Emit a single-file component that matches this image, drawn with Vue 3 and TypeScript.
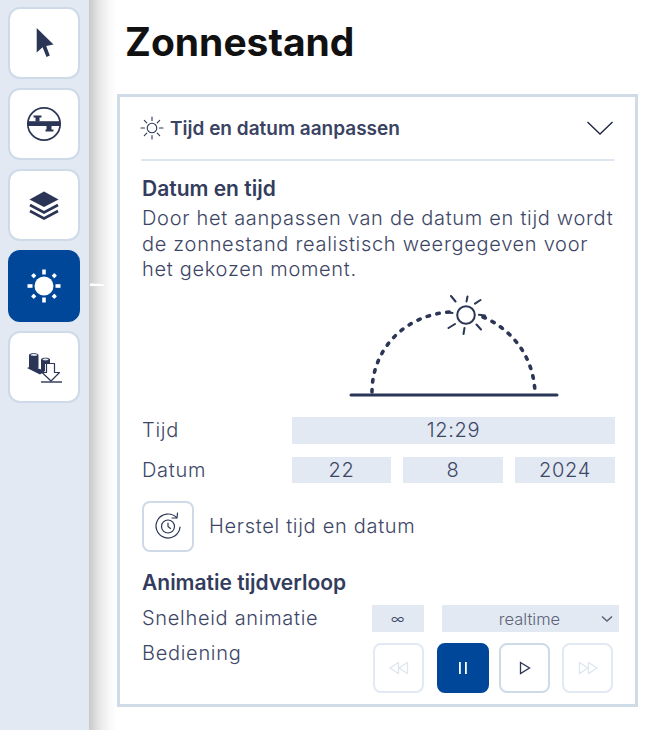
<script setup lang="ts">
const dots = [22, 8, 2024]
</script>

<template>
  <div class="page">
    <nav class="rail">
      <button class="tool">
        <svg width="28" height="32" viewBox="0 0 28 32"><path d="M6.700 1 L6.700 25.500 L12.600 20.200 L16.500 30 L19.800 28.600 L16.200 19 L23.500 17.500 Z" fill="#2b3555"/></svg>
      </button>
      <button class="tool">
        <svg width="36" height="36" viewBox="0 0 36 36">
          <circle cx="18" cy="18" r="16.200" fill="none" stroke="#2b3555" stroke-width="1.700"/>
          <path d="M2 15.200 H34 V20 H2 Z" fill="#2b3555"/>
          <path d="M7.500 9.500 H15.500 V11.500 H13.500 V15.500 H9.500 V11.500 H7.500 Z" fill="#2b3555"/>
          <path d="M20.500 19.500 H25.500 V23.500 H27.500 V25.500 H19.500 V23.500 H20.500 Z" fill="#2b3555"/>
        </svg>
      </button>
      <button class="tool">
        <svg width="32" height="30" viewBox="0 0 32 30">
          <path d="M16 1.500 L30.500 9.500 L16 17 L1.500 9.500 Z" fill="#2b3555"/>
          <path d="M2 15 L16 22.500 L30 15 M2 21 L16 28.500 L30 21" fill="none" stroke="#2b3555" stroke-width="2.600"/>
        </svg>
      </button>
      <button class="tool active">
        <svg width="34" height="34" viewBox="0 0 34 34" fill="#fff">
          <circle cx="17" cy="17" r="9.500"/>
          <rect x="15.200" y="0.500" width="3.600" height="5"/><rect x="15.200" y="28.500" width="3.600" height="5"/>
          <rect x="0.500" y="15.200" width="5" height="3.600"/><rect x="28.500" y="15.200" width="5" height="3.600"/>
          <rect x="4.800" y="4.800" width="3.800" height="3.800" rx="0.600" transform="rotate(45 6.700 6.700)"/>
          <rect x="25.400" y="4.800" width="3.800" height="3.800" rx="0.600" transform="rotate(45 27.300 6.700)"/>
          <rect x="4.800" y="25.400" width="3.800" height="3.800" rx="0.600" transform="rotate(45 6.700 27.300)"/>
          <rect x="25.400" y="25.400" width="3.800" height="3.800" rx="0.600" transform="rotate(45 27.300 27.300)"/>
        </svg>
      </button>
      <button class="tool">
        <svg width="36" height="32" viewBox="0 0 36 32">
          <path d="M1 17 L6 15 L19 20 L14 23.500 Z" fill="#2b3555"/>
          <path d="M3 4 C3 1.500 12.500 1.500 12.500 4 V16.500 C12 18.500 3.500 18.500 3 16.500 Z" fill="#2b3555"/>
          <path d="M15 8.500 C15 6 24 6 24 8.500 V13 H19 V20 H15 Z" fill="#2b3555"/>
          <path d="M4.500 4 C5.500 2.800 10.500 2.800 11.500 4 C10.500 5.200 5.500 5.200 4.500 4 Z M16.500 8.500 C17.500 7.300 21.500 7.300 22.500 8.500 C21.500 9.700 17.500 9.700 16.500 8.500 Z" fill="#e2e9f2"/>
          <path d="M20.500 12.500 H28.500 V21.500 H33.500 L25 30 L16 21.500 H20.500 Z" fill="#fff" stroke="#2b3555" stroke-width="1.200" stroke-linejoin="round"/>
          <path d="M15 31 H36" stroke="#2b3555" stroke-width="1.400"/>
        </svg>
      </button>
    </nav>
    <span class="handle"></span>

    <main class="main">
      <h1>Zonnestand</h1>
      <section class="panel">
        <header class="head">
          <div class="head-title">
            <svg width="24" height="24" viewBox="0 0 24 24" fill="none" stroke="#2b3555" stroke-width="1.100" stroke-linecap="round">
              <circle cx="12" cy="12" r="4.800"/>
              <path d="M12 1V4.500M12 19.500V23M1 12H4.500M19.500 12H23M4.300 4.300L6.800 6.800M17.200 17.200L19.700 19.700M19.700 4.300L17.200 6.800M6.800 17.200L4.300 19.700"/>
            </svg>
            <span>Tijd en datum aanpassen</span>
          </div>
          <svg class="caret" width="28" height="16" viewBox="0 0 28 16" fill="none" stroke="#1f2740" stroke-width="1.400"><path d="M1.500 2 L14 14 L26.500 2"/></svg>
        </header>

        <h2 class="first">Datum en tijd</h2>
        <p class="copy">Door het aanpassen van de datum en tijd wordt de zonnestand realistisch weergegeven voor het gekozen moment.</p>

        <svg class="arc" width="210" height="104" viewBox="0 0 210 104" fill="none">
          <path d="M23 97 C23 55 55 20 101 17" stroke="#2b3555" stroke-width="3.600" stroke-linecap="round" stroke-dasharray="2.500 7.500"/>
          <path d="M134 22 C160 33 184 58 186 97" stroke="#2b3555" stroke-width="3.600" stroke-linecap="round" stroke-dasharray="2.500 7.500"/>
          <path d="M2 100 H208" stroke="#2b3555" stroke-width="3" stroke-linecap="round"/>
          <circle cx="117" cy="20" r="8.800" stroke="#2b3555" stroke-width="2"/>
          <path d="M118.500 1.500 L117.500 6.500 M131.500 5 L126 8.700 M136 20.500 L130 19.800 M132 34.500 L127.500 29.500 M114.500 39 L115.500 33 M99.500 33 L106 29 M98 17 L103.500 18 M102 1 L106.500 6.500" stroke="#2b3555" stroke-width="2" stroke-linecap="round"/>
        </svg>

        <div class="row tijd">
          <span class="label">Tijd</span>
          <div class="field wide">12:29</div>
        </div>
        <div class="row datum">
          <span class="label">Datum</span>
          <div class="triple">
            <div v-for="d in dots" :key="d" class="field">{{ d }}</div>
          </div>
        </div>

        <div class="reset">
          <button class="ctl">
            <svg width="28" height="28" viewBox="0 0 28 28" fill="none" stroke="#2b3555" stroke-width="1.200" stroke-linecap="round" stroke-linejoin="round">
              <path d="M26 15 A12 12 0 1 1 22.500 5.500"/>
              <path d="M23.500 1 L23 6 L18 6"/>
              <circle cx="14" cy="14.500" r="6.500"/>
              <path d="M14 11 V14.500 L16.500 16.500"/>
            </svg>
          </button>
          <span class="label">Herstel tijd en datum</span>
        </div>

        <h2 class="second">Animatie tijdverloop</h2>
        <div class="row speed">
          <span class="label">Snelheid animatie</span>
          <div class="field small">∞</div>
          <div class="field select">
            <span>realtime</span>
            <svg width="12" height="8" viewBox="0 0 12 8" fill="none" stroke="#5b6478" stroke-width="1.500"><path d="M1 1.500 L6 6 L11 1.500"/></svg>
          </div>
        </div>
        <div class="row controls">
          <span class="label">Bediening</span>
          <div class="buttons">
            <button class="ctl off">
              <svg width="22" height="14" viewBox="0 0 22 14" fill="none" stroke="#dfe6f0" stroke-width="1.300"><path d="M10.500 1.500 L2 7 L10.500 12.500 Z M19.500 1.500 L11 7 L19.500 12.500 Z"/></svg>
            </button>
            <button class="ctl on">
              <svg width="10" height="14" viewBox="0 0 10 14" fill="#fff"><rect x="1" y="1" width="1.800" height="12"/><rect x="7" y="1" width="1.800" height="12"/></svg>
            </button>
            <button class="ctl plain">
              <svg width="12" height="14" viewBox="0 0 12 14" fill="none" stroke="#2b3555" stroke-width="1.300"><path d="M1.500 1.500 L10.500 7 L1.500 12.500 Z"/></svg>
            </button>
            <button class="ctl off">
              <svg width="22" height="14" viewBox="0 0 22 14" fill="none" stroke="#dfe6f0" stroke-width="1.300"><path d="M2.500 1.500 L11 7 L2.500 12.500 Z M11.500 1.500 L20 7 L11.500 12.500 Z"/></svg>
            </button>
          </div>
        </div>
      </section>
    </main>
  </div>
</template>

<style>
html, body { margin: 0; background: #fff; }
</style>

<style scoped>
.page {
  position: relative;
  display: flex;
  width: 657px;
  height: 730px;
  overflow: hidden;
  font-family: Inter, "Liberation Sans", sans-serif;
  color: #2b3555;
}
button { padding: 0; font: inherit; cursor: pointer; }
.rail {
  box-sizing: border-box;
  flex: 0 0 89px;
  display: flex;
  flex-direction: column;
  gap: 9px;
  padding: 7px 8px;
  background: #e2e9f2;
}
.tool {
  box-sizing: border-box;
  width: 72px;
  height: 72px;
  display: flex;
  align-items: center;
  justify-content: center;
  background: #fff;
  border: 2px solid #cfdae8;
  border-radius: 12px;
}
.tool.active { background: #004699; border-color: #004699; }
.handle {
  position: absolute;
  left: 90px;
  top: 283px;
  width: 14px;
  height: 3px;
  background: #fff;
  border-top: 1px solid #e9e9e9;
  box-sizing: border-box;
}
.main {
  flex: 1;
  box-sizing: border-box;
  padding: 0 19px 0 28px;
  background: linear-gradient(90deg, #c9c9c9 0, #e6e6e6 10px, #f8f8f8 20px, #fff 28px);
}
h1 {
  margin: 0 0 0 8px;
  height: 94px;
  font-size: 39px;
  line-height: 84px;
  font-weight: 700;
  color: #111;
}
.panel {
  box-sizing: border-box;
  width: 521px;
  height: 613px;
  padding: 0 21px;
  background: #fff;
  border: 3px solid #d0dbe8;
}
.head {
  height: 62px;
  display: flex;
  align-items: center;
  justify-content: space-between;
  border-bottom: 2px solid #dde5f0;
}
.head-title { display: flex; align-items: center; gap: 6px; font-size: 19px; font-weight: 600; color: #3a4362; }
.head-title svg { margin-left: -1px; }
h2 { margin: 0; font-size: 21px; line-height: 24px; font-weight: 600; color: #333c5c; }
.first { margin-top: 16px; margin-left: 1px; }
.second { margin-top: 19px; margin-left: 1px; }
.copy {
  margin: 5px -6px 0 1px;
  font-size: 20px;
  font-weight: 300;
  line-height: 25.600px;
  letter-spacing: 0.700px;
  color: #3d4666;
}
.arc { display: block; margin: 12px 0 0 208px; }
.label { font-size: 20px; font-weight: 300; color: #3d4666; letter-spacing: 0.700px; white-space: nowrap; }
.row { display: flex; align-items: center; margin-left: 1px; }
.row > .label { flex: 0 0 150px; }
.tijd { margin-top: 18px; }
.datum { margin-top: 13px; }
.field {
  box-sizing: border-box;
  flex: none;
  height: 27px;
  display: flex;
  align-items: center;
  justify-content: center;
  background: #e2e9f2;
  font-size: 20px;
  font-weight: 300;
  letter-spacing: 0.700px;
  color: #3d4666;
}
.wide { width: 323px; }
.triple { flex: none; display: grid; grid-template-columns: 99px 100px 100px; column-gap: 12px; }
.datum .field { height: 26px; }
.reset { display: flex; align-items: center; gap: 15px; margin: 18px 0 0 1px; }
.ctl {
  box-sizing: border-box;
  flex: none;
  width: 52px;
  height: 51px;
  display: flex;
  align-items: center;
  justify-content: center;
  background: #fff;
  border: 2px solid #cfdae8;
  border-radius: 8px;
}
.ctl.off { border-color: #e2e9f2; width: 51px; height: 50px; }
.ctl.on { background: #004699; border-color: #004699; height: 50px; }
.ctl.plain { width: 51px; height: 50px; }
.speed { margin-top: 10px; }
.speed > .label { flex-basis: 230px; }
.small { width: 52px; font-size: 15px; margin-right: 18px; }
.select {
  position: relative;
  width: 177px;
  padding: 2px 2px 0 0;
  font-size: 16.500px;
  letter-spacing: 0;
  color: #5b6478;
}
.select svg { position: absolute; right: 6px; top: 10px; }
.controls { align-items: flex-start; margin-top: 11px; }
.controls > .label { flex-basis: 231px; line-height: 20px; }
.buttons { display: flex; gap: 12px; }
.buttons .ctl:nth-child(2) { margin-left: 1px; width: 52px; }
.buttons .ctl:nth-child(3) { margin-left: -2px; }
</style>
